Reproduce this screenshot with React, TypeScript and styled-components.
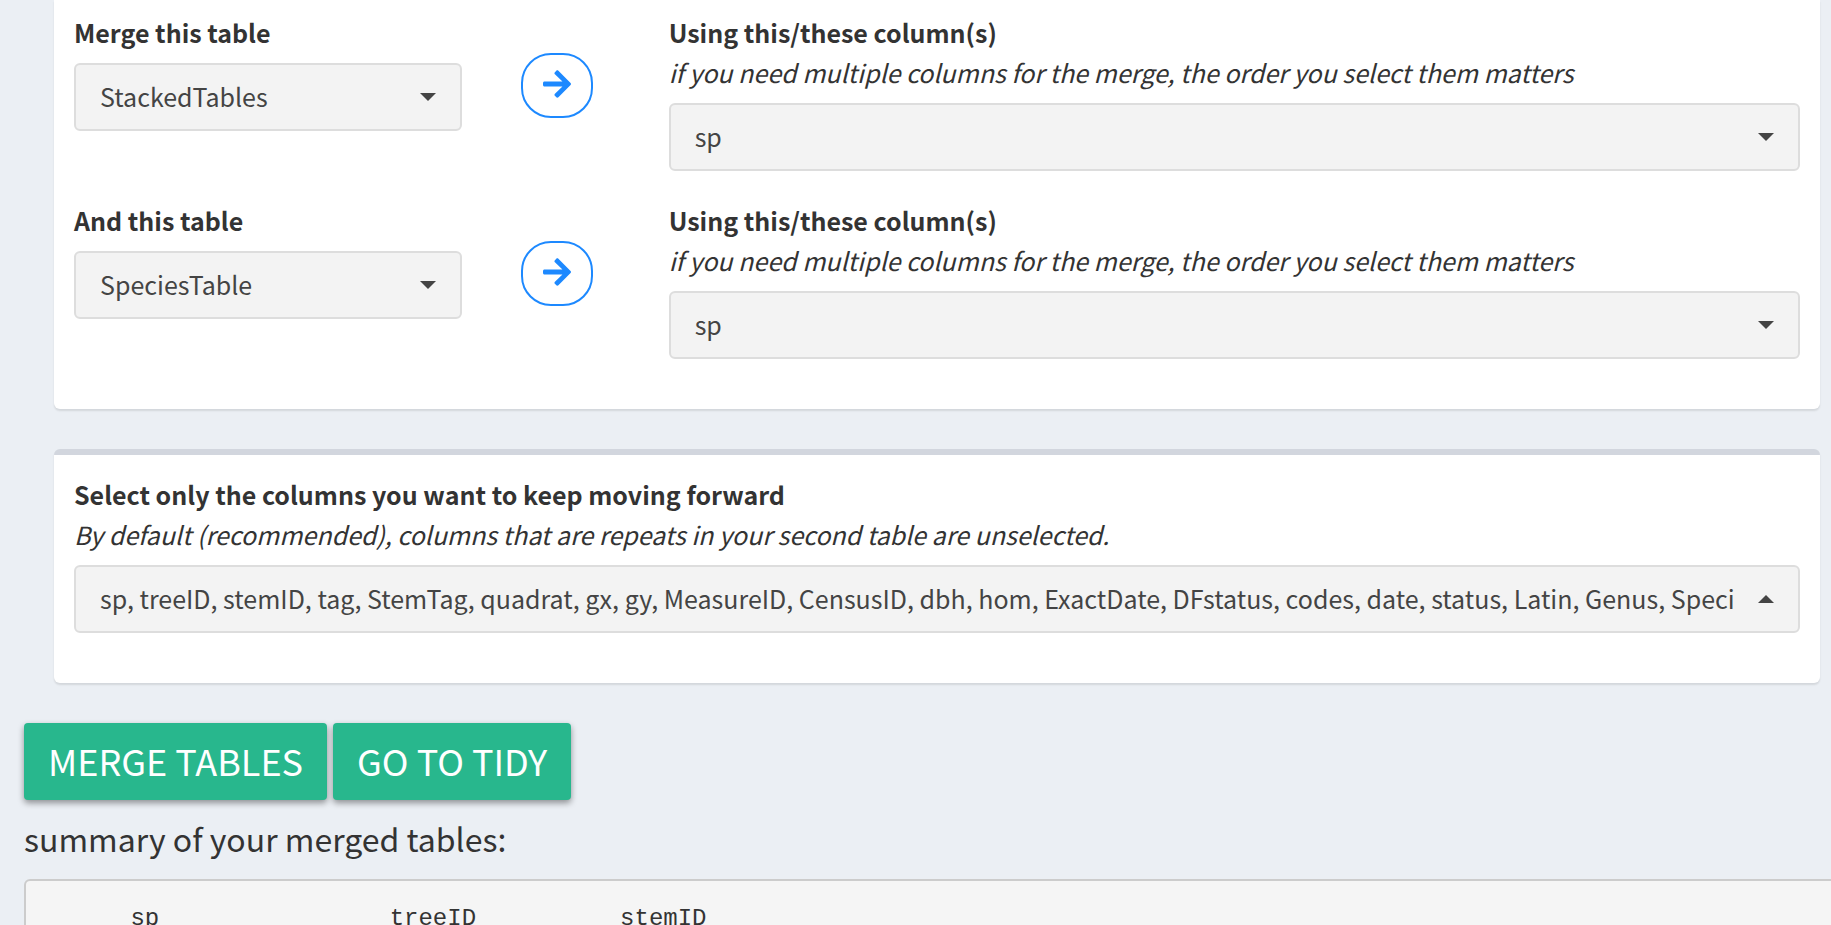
import React from "react";
import styled, { createGlobalStyle } from "styled-components";
import { FaArrowRight } from "react-icons/fa";

const sans = `"Source Sans Pro", "Noto Sans CJK SC", "Open Sans", sans-serif`;

const GlobalStyle = createGlobalStyle`
  *, *::before, *::after { box-sizing: border-box; }
  html { overflow-x: hidden; }
  body {
    margin: 0;
    background: #ebeff4;
    color: #333;
    font-family: ${sans};
    font-size: 25px;
    line-height: 40px;
  }
`;

const Page = styled.main`
  height: 100vh;
  overflow: hidden;
`;

const Cards = styled.div`
  display: flex;
  flex-direction: column;
  gap: 40px;
  padding: 0 11px 0 54px;
`;

const Card = styled.section<{ $continued?: boolean }>`
  padding: ${(p) => (p.$continued ? "12px" : "19px")} 20px 50px;
  background: #fff;
  border-top: ${(p) => (p.$continued ? "0" : "6px solid #d2d6de")};
  border-radius: ${(p) => (p.$continued ? "0 0 6px 6px" : "6px")};
  box-shadow: 0 2px 2px rgba(0, 0, 0, 0.1);
`;

const Rows = styled.div`
  display: flex;
  flex-direction: column;
  gap: 29px;
`;

const Row = styled.div`
  display: grid;
  grid-template-columns: repeat(12, minmax(0, 1fr));
  column-gap: 58px;
  align-items: start;
`;

const Cell = styled.div<{ $span: number }>`
  grid-column: span ${(p) => p.$span};
`;

const FieldLabel = styled.label`
  display: block;
  margin-bottom: 11px;
  white-space: nowrap;
`;

const Title = styled.span`
  display: block;
  font-weight: 700;
`;

const Hint = styled.em`
  display: block;
  font-weight: 400;
`;

const SelectBox = styled.div`
  position: relative;
`;

const Select = styled.select`
  appearance: none;
  display: block;
  width: 100%;
  height: 68px;
  padding: 0 63px 2px 24px;
  border: 2px solid #ddd;
  border-radius: 6px;
  background: #f3f3f3;
  color: #444;
  font-family: ${sans};
  font-size: 25px;
`;

const Caret = styled.svg`
  position: absolute;
  top: 30px;
  right: 26px;
  width: 16px;
  height: 8px;
  fill: #444;
  pointer-events: none;
`;

const ArrowButton = styled.button`
  display: flex;
  align-items: center;
  justify-content: center;
  width: 72px;
  height: 65px;
  margin: 41px auto 0 1px;
  padding: 0 0 4px;
  border: 2px solid #1d89ff;
  border-radius: 30px;
  background: #fff;
  color: #1d89ff;
  font-size: 32px;
`;

const Results = styled.section`
  padding: 40px 0 0 24px;
`;

const Actions = styled.div`
  display: flex;
  gap: 6px;
`;

const ActionButton = styled.button`
  height: 77px;
  padding: 0 24px 4px;
  border: 0;
  border-radius: 4px;
  background: #28b78d;
  box-shadow: 0 3px 6px rgba(0, 0, 0, 0.4);
  color: #fff;
  font-family: ${sans};
  font-size: 36px;
  text-transform: uppercase;
  white-space: nowrap;
`;

const Heading = styled.h4`
  margin: 18px 0 21px;
  font-size: 32px;
  font-weight: 400;
  line-height: 40px;
`;

const Output = styled.pre`
  margin: 0 -20px 0 0;
  padding: 18px;
  border: 2px solid #ccc;
  border-radius: 6px;
  background: #f5f5f5;
  color: #333;
  font-family: Consolas, "Liberation Mono", monospace;
  font-size: 24px;
  line-height: 40px;
`;

type FieldProps = {
  id: string;
  title: string;
  hint?: string;
  value: string;
  up?: boolean;
};

const Field = ({ id, title, hint, value, up }: FieldProps) => (
  <div>
    <FieldLabel htmlFor={id}>
      <Title>{title}</Title>
      {hint && <Hint>{hint}</Hint>}
    </FieldLabel>
    <SelectBox>
      <Select id={id} defaultValue={value}>
        <option value={value}>{value}</option>
      </Select>
      <Caret viewBox="0 0 16 8" aria-hidden="true">
        <path d={up ? "M0 8L8 0L16 8Z" : "M0 0H16L8 8Z"} />
      </Caret>
    </SelectBox>
  </div>
);

const merges = [
  { key: "first", title: "Merge this table", table: "StackedTables" },
  { key: "second", title: "And this table", table: "SpeciesTable" },
];

const keptColumns = [
  "sp", "treeID", "stemID", "tag", "StemTag", "quadrat", "gx", "gy", "MeasureID",
  "CensusID", "dbh", "hom", "ExactDate", "DFstatus", "codes", "date", "status",
  "Latin", "Genus", "Species",
].join(", ");

const summary = "      sp                treeID          stemID";

export default function App() {
  return (
    <Page>
      <GlobalStyle />
      <Cards>
        <Card $continued>
          <Rows>
            {merges.map((m) => (
              <Row key={m.key}>
                <Cell $span={3}>
                  <Field id={`${m.key}-table`} title={m.title} value={m.table} />
                </Cell>
                <Cell $span={1}>
                  <ArrowButton type="button" aria-label="Choose columns">
                    <FaArrowRight />
                  </ArrowButton>
                </Cell>
                <Cell $span={8}>
                  <Field
                    id={`${m.key}-columns`}
                    title="Using this/these column(s)"
                    hint="if you need multiple columns for the merge, the order you select them matters"
                    value="sp"
                  />
                </Cell>
              </Row>
            ))}
          </Rows>
        </Card>
        <Card>
          <Field
            id="kept-columns"
            title="Select only the columns you want to keep moving forward"
            hint="By default (recommended), columns that are repeats in your second table are unselected."
            value={keptColumns}
            up
          />
        </Card>
      </Cards>
      <Results>
        <Actions>
          <ActionButton type="button">Merge tables</ActionButton>
          <ActionButton type="button">Go to tidy</ActionButton>
        </Actions>
        <Heading>summary of your merged tables:</Heading>
        <Output>{summary}</Output>
      </Results>
    </Page>
  );
}
